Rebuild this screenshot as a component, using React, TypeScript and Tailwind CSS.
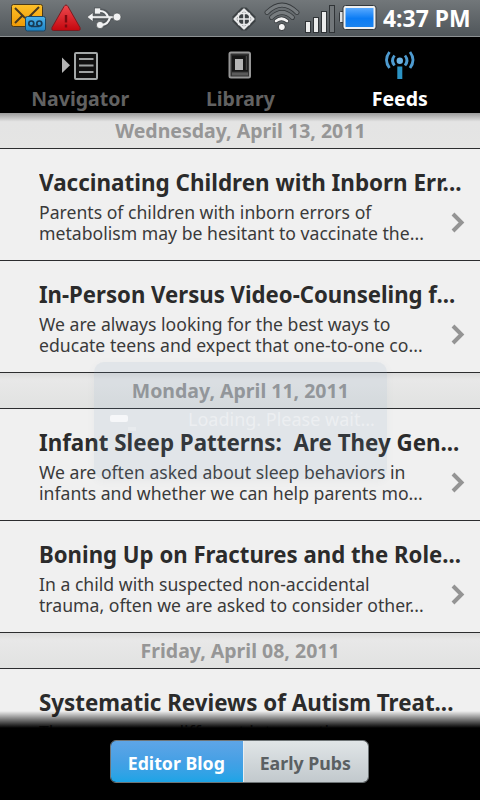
import type { ReactNode } from "react";
import clsx from "clsx";

type Article = { title: string; titleClass: string; lines: string[] };
type Group = { date: string; articles: Article[] };

const groups: Group[] = [
  {
    date: "Wednesday, April 13, 2011",
    articles: [
      {
        title: "Vaccinating Children with Inborn Err...",
        titleClass: "scale-x-[0.935]",
        lines: ["Parents of children with inborn errors of", "metabolism may be hesitant to vaccinate the..."]
      },
      {
        title: "In-Person Versus Video-Counseling f...",
        titleClass: "scale-x-[0.923]",
        lines: ["We are always looking for the best ways to", "educate teens and expect that one-to-one co..."]
      }
    ]
  },
  {
    date: "Monday, April 11, 2011",
    articles: [
      {
        title: "Infant Sleep Patterns:  Are They Gen...",
        titleClass: "scale-x-[0.931]",
        lines: ["We are often asked about sleep behaviors in", "infants and whether we can help parents mo..."]
      },
      {
        title: "Boning Up on Fractures and the Role...",
        titleClass: "scale-x-[0.924]",
        lines: ["In a child with suspected non-accidental", "trauma, often we are asked to consider other..."]
      }
    ]
  },
  {
    date: "Friday, April 08, 2011",
    articles: [
      {
        title: "Systematic Reviews of Autism Treat...",
        titleClass: "scale-x-[0.931]",
        lines: ["There are many different interventions"]
      }
    ]
  }
];

function StatusBar() {
  return (
    <header className="flex h-[37px] shrink-0 items-start border-b border-[#8d9193] bg-linear-to-b from-[#72777a] to-[#50565a]">
      <svg width="130" height="36" viewBox="0 0 130 36" aria-hidden>
        <defs>
          <linearGradient id="mail" x1="0" y1="0" x2="0" y2="1">
            <stop offset="0" stopColor="#fdc02a" />
            <stop offset="1" stopColor="#f09a05" />
          </linearGradient>
          <linearGradient id="tape" x1="0" y1="0" x2="0" y2="1">
            <stop offset="0" stopColor="#4fb4ec" />
            <stop offset="1" stopColor="#1b83c6" />
          </linearGradient>
          <linearGradient id="alert" x1="0" y1="0" x2="0" y2="1">
            <stop offset="0" stopColor="#ef4a4e" />
            <stop offset="1" stopColor="#c4060e" />
          </linearGradient>
        </defs>
        <rect x="11.5" y="4.500" width="31" height="22" rx="2" fill="url(#mail)" stroke="#4b3a18" />
        <path d="M15 8l9 9q2.500 2 5 0l10-10M15 23l7-7M31 16l6 6" fill="none" stroke="#4a3a20" strokeWidth="2" />
        <rect x="25.500" y="16.500" width="20" height="14.500" rx="2" fill="url(#tape)" stroke="#1d4663" />
        <circle cx="31.300" cy="23.500" r="2.500" fill="none" stroke="#173c58" strokeWidth="1.700" />
        <circle cx="39.300" cy="23.500" r="2.500" fill="none" stroke="#173c58" strokeWidth="1.700" />
        <path d="M31 26.500h8.500" stroke="#173c58" strokeWidth="1.500" />
        <path d="M66 5q1 0 2 1.500l12 21q1 3-1.500 3h-25q-2.500 0-1.500-3l12-21Q65 5 66 5z" fill="url(#alert)" stroke="#7b1b20" />
        <path d="M66 15v7.500M66 24.500v3" stroke="#7e0a10" strokeWidth="2.400" />
        <path d="M91 17.500h26M101 11q5 0 8 6M101 25q7 0 7.500-7" stroke="#3f4447" strokeOpacity=".5" strokeWidth="5" fill="none" />
        <g fill="#f1f2f3" stroke="#3f4447" strokeWidth=".6">
          <path d="M87 17l6-4.500v3.300h24v2.600H93v3.300z" />
          <circle cx="117" cy="17" r="4" />
          <rect x="94.500" y="8" width="6" height="6" />
          <circle cx="100" cy="25" r="3.600" />
          <path d="M100 11q6 0 8 6M102 25q6-.5 8-7.500" fill="none" stroke="#f1f2f3" strokeWidth="2.200" />
        </g>
      </svg>
      <svg className="ml-[95px]" width="152" height="36" viewBox="225 0 152 36" aria-hidden>
        <defs>
          <linearGradient id="charge" x1="0" y1="0" x2="0" y2="1">
            <stop offset="0" stopColor="#58a9ff" />
            <stop offset=".55" stopColor="#0b7cf4" />
            <stop offset="1" stopColor="#1b83ee" />
          </linearGradient>
        </defs>
        <path d="M241.500 7.500h5l9 9v5l-9 9h-5l-9-9v-5z" fill="#3d4245" />
        <g fill="none" stroke="#e9eaeb" strokeWidth="2.200">
          <path d="M244 9.500L253.500 19 244 28.500 234.500 19z" strokeLinejoin="round" />
          <path d="M238.500 13.500h11v11h-11z" strokeWidth="1.300" strokeLinejoin="round" />
          <path d="M244 10v18M235 19h18" strokeWidth="1.600" />
        </g>
        <g fill="none" strokeLinecap="round">
          <path d="M267 12.500q15-15 30 0" stroke="#34383b" strokeWidth="4.800" />
          <path d="M267 12.500q15-15 30 0" stroke="#777c7f" strokeWidth="3.200" />
          <path d="M271.500 17.500q10.500-10 21 0" stroke="#34383b" strokeWidth="4.800" />
          <path d="M271.500 17.500q10.500-10 21 0" stroke="#777c7f" strokeWidth="3.200" />
          <path d="M276 21q5.500-4.500 11 0" stroke="#34383b" strokeWidth="4.200" />
          <path d="M276 21q5.500-4.500 11 0" stroke="#f3f3f3" strokeWidth="2.700" />
        </g>
        <circle cx="281.800" cy="27" r="3.600" fill="#f5f5f5" stroke="#34383b" />
        <g fill="#eceded" stroke="#303437">
          <rect x="305.500" y="21.500" width="5" height="11" />
          <rect x="313.500" y="17.500" width="5" height="15" />
          <rect x="321.500" y="11.500" width="5" height="21" />
          <rect x="329.500" y="5.500" width="5" height="27" fill="#72777a" />
        </g>
        <rect x="339.500" y="11.500" width="5" height="11" rx="1" fill="#dfe1e2" stroke="#34383b" />
        <rect x="343" y="5.500" width="33" height="24" rx="2.500" fill="#eff0f0" stroke="#34383b" />
        <rect x="345.500" y="8" width="28" height="19" rx=".5" fill="url(#charge)" />
      </svg>
      <span className="ml-[6px] origin-left scale-x-[0.955] text-2xl leading-[36px] font-bold whitespace-nowrap text-white">
        4:37 PM
      </span>
    </header>
  );
}

function NavigatorIcon() {
  return (
    <svg className="shrink-0" width="40" height="34" viewBox="60 48 40 34" aria-hidden>
      <path d="M62 57.500l8 7.800-8 7.700z" fill="#b4b4b4" />
      <rect x="75" y="53" width="22" height="26" rx="1" fill="#101010" stroke="#a4a8a8" strokeWidth="2" />
      <path d="M79 59h14.500M79 65.500h14.500M79 72h14.500" stroke="#a0a3a3" strokeWidth="1.800" />
    </svg>
  );
}

function LibraryIcon() {
  return (
    <svg className="shrink-0" width="40" height="34" viewBox="220 48 40 34" aria-hidden>
      <rect x="229.500" y="52.500" width="20.500" height="25" rx="1.500" fill="#333" stroke="#969696" strokeWidth="2" />
      <rect x="232" y="55.500" width="16" height="16" fill="#161616" />
      <path d="M232 74h16" stroke="#5a5a5a" strokeWidth="3" />
      <rect x="235" y="59" width="8" height="11" fill="#b5b5b5" />
      <path d="M246.500 56v14" stroke="#444" strokeWidth="1.500" />
    </svg>
  );
}

function FeedsIcon() {
  return (
    <svg className="shrink-0" width="40" height="34" viewBox="380 48 40 34" aria-hidden>
      <g fill="none" stroke="#4e9bd0" strokeWidth="2.800">
        <path d="M389.500 52q-6 8 0 16" />
        <path d="M394.500 55.500q-4 5 0 10" />
        <path d="M405 55.500q4 5 0 10" />
        <path d="M410 52q6 8 0 16" />
      </g>
      <circle cx="399.800" cy="60.700" r="3.200" fill="#6bb2e2" />
      <rect x="397.300" y="66.500" width="5" height="12.500" fill="#2b93c4" />
    </svg>
  );
}

function Tab({ icon, label, active = false }: { icon: ReactNode; label: string; active?: boolean }) {
  return (
    <div className="flex w-40 flex-col items-center pt-[11px]">
      {icon}
      <span
        className={clsx(
          "scale-x-[0.975] text-xl leading-[34px] font-bold",
          active ? "text-white" : "text-[#626262]"
        )}
      >
        {label}
      </span>
    </div>
  );
}

function ArticleRow({ article }: { article: Article }) {
  return (
    <li className="relative h-28 border-b border-[#2c2d2f] pt-[17px] pl-[39px]">
      <h2 className="text-2xl leading-8 font-bold whitespace-pre text-[#2b2b2b]">
        <span className={clsx("inline-block origin-left", article.titleClass)}>{article.title}</span>
      </h2>
      <p className="mt-[4px] mr-10 text-lg leading-[21px] whitespace-pre text-[#3a3a3a]">
        {article.lines.map((line) => (
          <span key={line} className="block origin-left scale-x-[0.979]">
            {line}
          </span>
        ))}
      </p>
      <svg className="absolute top-[62px] right-[14px]" width="16" height="22" viewBox="0 0 16 22" aria-hidden>
        <path d="M3 3l8.500 8.500L3 20" fill="none" stroke="#949494" strokeWidth="4" />
      </svg>
    </li>
  );
}

function LoadingToast() {
  return (
    <div className="absolute top-[362px] left-[94px] h-[117px] w-[293px] rounded-[10px] bg-[#7fa0bd]/12 shadow-[0_2px_8px_rgba(80,100,120,0.05)]">
      <div className="absolute top-[53px] left-[16px] h-[7px] w-[18px] rounded-xs bg-white/70" />
      <div className="absolute top-[65px] left-[34px] h-1 w-2 bg-white/25" />
      <span className="absolute top-[43px] left-[94px] text-lg leading-7 whitespace-nowrap text-white/40">
        Loading. Please wait...
      </span>
    </div>
  );
}

export default function App() {
  return (
    <div className="relative flex h-[800px] w-[480px] flex-col overflow-hidden bg-[#f0f0f0] font-['Noto_Sans',sans-serif]">
      <StatusBar />
      <nav className="flex h-[76px] shrink-0 bg-black">
        <Tab icon={<NavigatorIcon />} label="Navigator" />
        <Tab icon={<LibraryIcon />} label="Library" />
        <Tab icon={<FeedsIcon />} label="Feeds" active />
      </nav>
      <main className="h-[615px] shrink-0 overflow-hidden">
        {groups.map((group, i) => (
          <section key={group.date}>
            <h1
              className={clsx(
                "h-9 border-b border-[#2c2d2f] text-center text-xl leading-[35px] font-bold text-[#969696]",
                i === 0
                  ? "bg-linear-to-b from-[#9b9b9b] via-[#e4e4e4] via-25% to-[#e5e5e4]"
                  : "bg-linear-to-b from-[#dcdcdc] via-[#e8e8e8] via-20% to-[#e1e2e1]"
              )}
            >
              <span className="inline-block scale-x-[0.975]">{group.date}</span>
            </h1>
            <ul>
              {group.articles.map((article) => (
                <ArticleRow key={article.title} article={article} />
              ))}
            </ul>
          </section>
        ))}
      </main>
      <LoadingToast />
      <div className="absolute top-[711px] left-0 h-[17px] w-full bg-linear-to-b from-black/0 to-black" />
      <footer className="flex grow justify-center bg-black pt-3">
        <div className="mr-[2px] flex h-[43px] w-[259px] overflow-hidden rounded-md border border-[#6e7476] text-lg leading-[45px] font-bold">
          <button className="w-[132px] bg-linear-to-b from-[#5ea5e6] via-[#45a0e5] via-50% to-[#1ba4e6] text-white">
            <span className="inline-block scale-x-[0.985]">Editor Blog</span>
          </button>
          <button className="grow border-l border-[#e8eef1] bg-linear-to-b from-[#e0e5e7] to-[#c2c9cd] text-[#5b6062]">
            <span className="inline-block scale-x-[0.985]">Early Pubs</span>
          </button>
        </div>
      </footer>
    </div>
  );
}
